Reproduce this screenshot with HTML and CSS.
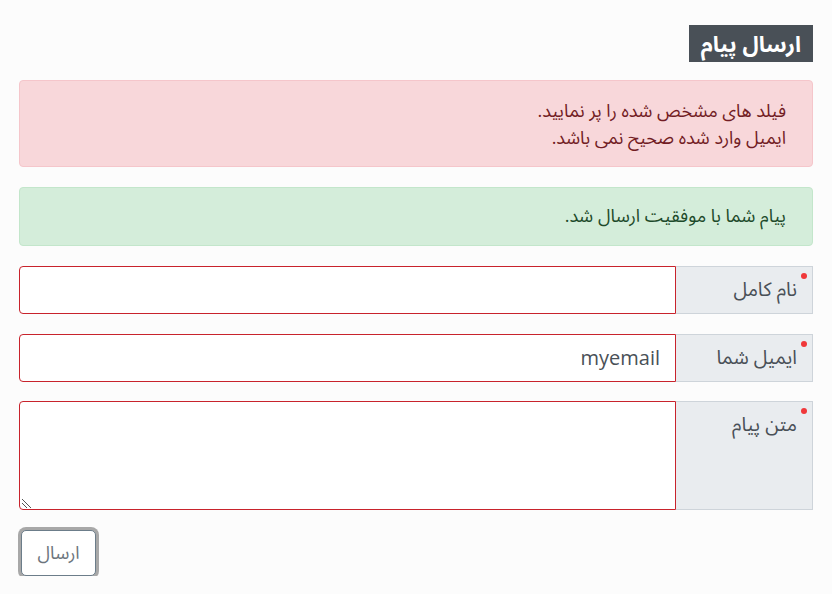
FILE: index.html
```html
<!DOCTYPE html>
<html lang="fa" dir="rtl">
<head>
<meta charset="utf-8">
<link rel="stylesheet" href="styles.css">
</head>
<body>
<div class="page">
  <h1 class="title">ارسال پیام</h1>
  <div class="alert alert-danger">
    <div>فیلد های مشخص شده را پر نمایید.</div>
    <div>ایمیل وارد شده صحیح نمی باشد.</div>
  </div>
  <div class="alert alert-success">
    <div>پیام شما با موفقیت ارسال شد.</div>
  </div>
  <div class="group">
    <label class="label">نام کامل</label>
    <div class="field"></div>
  </div>
  <div class="group">
    <label class="label">ایمیل شما</label>
    <div class="field"><span class="value">myemail</span></div>
  </div>
  <div class="group group-tall">
    <label class="label">متن پیام</label>
    <div class="field field-area">
      <svg class="grip" width="12" height="12" viewBox="0 0 12 12"><line x1="1" y1="3" x2="10" y2="12" stroke="#555" stroke-width="1"/><line x1="1" y1="7" x2="6" y2="12" stroke="#555" stroke-width="1"/></svg>
    </div>
  </div>
  <div class="actions">
    <button class="btn">ارسال</button>
  </div>
</div>
</body>
</html>
```
FILE: styles.css
```css
html, body {
  margin: 0;
  padding: 0;
  background: #fcfcfc;
}
body {
  font-family: "Open Sans", "Noto Sans Arabic", "Noto Naskh Arabic", "Vazirmatn", "Noto Sans", "DejaVu Sans", sans-serif;
  color: #212529;
}
.page {
  padding: 25px 19px 0 19px;
  display: flex;
  flex-direction: column;
}
.title {
  align-self: flex-start;
  margin: 0;
  background: #495057;
  color: #fff;
  font-size: 22px;
  font-weight: bold;
  height: 37px;
  line-height: 37px;
  padding: 0 12px;
}
.alert {
  box-sizing: border-box;
  border: 1px solid transparent;
  border-radius: 4px;
  padding: 15px 26px;
  font-size: 18px;
  line-height: 27px;
}
.alert-danger {
  margin-top: 18px;
  background: #f8d7da;
  border-color: #f5c6cb;
  color: #721c24;
  height: 87px;
  padding-top: 16px;
}
.alert-success {
  margin-top: 20px;
  background: #d4edda;
  border-color: #c3e6cb;
  color: #1d4a2a;
  height: 59px;
  padding-top: 14px;
}
.group {
  margin-top: 20px;
  display: flex;
  height: 48px;
}
.group-tall {
  margin-top: 19px;
  height: 109px;
}
.label {
  position: relative;
  width: 137px;
  box-sizing: border-box;
  background: #e9ecef;
  border: 1px solid #ced4da;
  border-left: none;
  padding: 7px 15px 0 0;
  font-size: 19.5px;
  color: #495057;
  line-height: 30px;
}
.label::after {
  content: "";
  position: absolute;
  top: 6px;
  right: 5px;
  width: 6px;
  height: 6px;
  border-radius: 50%;
  background: #f0383a;
}
.field {
  flex: 1;
  position: relative;
  background: #fff;
  border: 1px solid #c8232c;
  border-radius: 4px 0 0 4px;
  display: flex;
  align-items: center;
  padding: 0 15px;
}
.value {
  font-size: 20px;
  color: #495057;
  margin-top: -2px;
}
.field-area {
  align-items: flex-end;
  justify-content: flex-end;
  padding: 0;
}
.grip {
  margin: 0 0 1px 1px;
}
.actions {
  margin-top: 20px;
  display: flex;
  justify-content: flex-end;
  padding-left: 1px;
}
.btn {
  margin-left: 1px;
  width: 75px;
  height: 46px;
  background: #fff;
  border: 1px solid #6c7d8a;
  border-radius: 5px;
  box-shadow: 0 0 0 3px #a8a8a8;
  font-family: inherit;
  font-size: 18px;
  color: #6c757d;
}
```
